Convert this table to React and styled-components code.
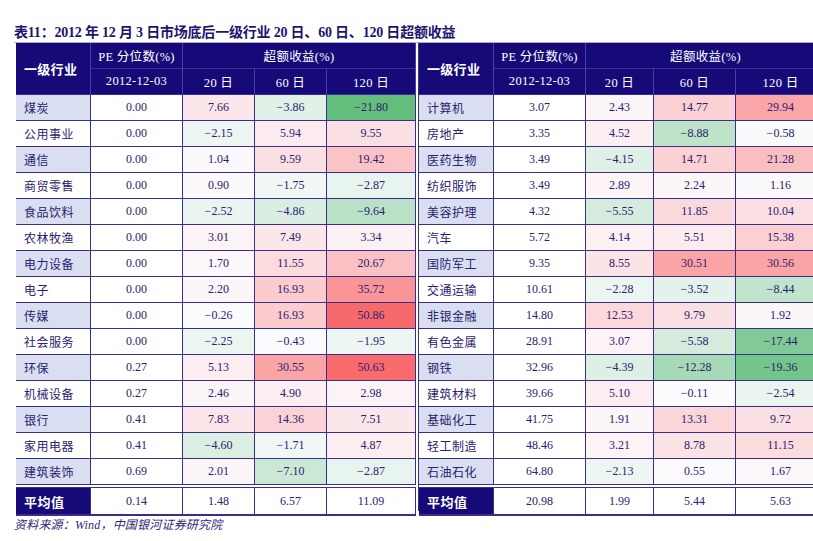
import styled, { createGlobalStyle } from 'styled-components';

const GlobalStyle = createGlobalStyle`
  html, body {
    margin: 0;
    padding: 0;
    background: #ffffff;
    overflow: hidden;
  }
  body {
    font-family: "Liberation Serif", "Noto Sans CJK SC", serif;
  }
`;

const NAVY = '#160a78';
const LINE = '#3a2d8c';
const INK = '#2a2270';

const leftRows = [
  ['煤炭', '0.00', 7.66, -3.86, -21.8],
  ['公用事业', '0.00', -2.15, 5.94, 9.55],
  ['通信', '0.00', 1.04, 9.59, 19.42],
  ['商贸零售', '0.00', 0.9, -1.75, -2.87],
  ['食品饮料', '0.00', -2.52, -4.86, -9.64],
  ['农林牧渔', '0.00', 3.01, 7.49, 3.34],
  ['电力设备', '0.00', 1.7, 11.55, 20.67],
  ['电子', '0.00', 2.2, 16.93, 35.72],
  ['传媒', '0.00', -0.26, 16.93, 50.86],
  ['社会服务', '0.00', -2.25, -0.43, -1.95],
  ['环保', '0.27', 5.13, 30.55, 50.63],
  ['机械设备', '0.27', 2.46, 4.9, 2.98],
  ['银行', '0.41', 7.83, 14.36, 7.51],
  ['家用电器', '0.41', -4.6, -1.71, 4.87],
  ['建筑装饰', '0.69', 2.01, -7.1, -2.87],
];

const rightRows = [
  ['计算机', '3.07', 2.43, 14.77, 29.94],
  ['房地产', '3.35', 4.52, -8.88, -0.58],
  ['医药生物', '3.49', -4.15, 14.71, 21.28],
  ['纺织服饰', '3.49', 2.89, 2.24, 1.16],
  ['美容护理', '4.32', -5.55, 11.85, 10.04],
  ['汽车', '5.72', 4.14, 5.51, 15.38],
  ['国防军工', '9.35', 8.55, 30.51, 30.56],
  ['交通运输', '10.61', -2.28, -3.52, -8.44],
  ['非银金融', '14.80', 12.53, 9.79, 1.92],
  ['有色金属', '28.91', 3.07, -5.58, -17.44],
  ['钢铁', '32.96', -4.39, -12.28, -19.36],
  ['建筑材料', '39.66', 5.1, -0.11, -2.54],
  ['基础化工', '41.75', 1.91, 13.31, 9.72],
  ['轻工制造', '48.46', 3.21, 8.78, 11.15],
  ['石油石化', '64.80', -2.13, 0.55, 1.67],
];

const leftAvg = ['0.14', '1.48', '6.57', '11.09'];
const rightAvg = ['20.98', '1.99', '5.44', '5.63'];

// Excel style three colour scale: green (min) - white (0) - red (max)
const MAX = 50.86;
const MIN = -21.8;
const mix = (a, b, t) => a.map((v, i) => Math.round(v + (b[i] - v) * t));
const heat = (v) => {
  const mid = [252, 252, 255];
  const c = v >= 0 ? mix(mid, [248, 105, 107], v / MAX) : mix(mid, [99, 190, 123], v / MIN);
  return `rgb(${c.join(',')})`;
};

const fmt = (v) => {
  const s = v.toFixed(2);
  return v < 0 ? '\u2212' + s.slice(1) : s;
};

const Page = styled.div`
  width: 840px;
  padding-left: 14px;
  color: ${INK};
`;

const Title = styled.h1`
  margin: 0;
  padding-top: 23px;
  height: 19px;
  line-height: 19px;
  font-size: 14px;
  font-weight: bold;
  color: #1c1470;
  white-space: nowrap;
  letter-spacing: -0.2px;
  border-bottom: 1px solid #aaa6d4;
`;

const Tables = styled.div`
  display: flex;
  gap: 2px;
  margin-left: 2px;
`;

const Panel = styled.div`
  display: grid;
  grid-template-columns: ${(p) => p.$cols};
  grid-auto-rows: 26px;
  border-left: ${(p) => (p.$first ? 'none' : `1px solid ${LINE}`)};
  align-content: start;
`;

const Head = styled.div`
  box-sizing: border-box;
  background: ${NAVY};
  color: #ffffff;
  font-size: ${(p) => (p.$left ? '13px' : '12.5px')};
  font-weight: ${(p) => (p.$left ? 600 : 'normal')};
  display: flex;
  align-items: center;
  justify-content: ${(p) => (p.$left ? 'flex-start' : 'center')};
  padding-left: ${(p) => (p.$left ? '8px' : '0')};
  border-right: 1px solid #4c40a4;
  border-bottom: 1px solid #3a2e98;
  grid-row: ${(p) => (p.$rows ? `span ${p.$rows}` : 'auto')};
  grid-column: ${(p) => (p.$cols ? `span ${p.$cols}` : 'auto')};
  letter-spacing: 0.3px;
`;

const Cell = styled.div`
  box-sizing: border-box;
  background: ${(p) => p.$bg || '#ffffff'};
  font-size: 12px;
  display: flex;
  align-items: center;
  justify-content: ${(p) => (p.$left ? 'flex-start' : 'center')};
  padding-left: ${(p) => (p.$left ? '8px' : '0')};
  border-right: 1px solid ${LINE};
  border-bottom: 1px solid ${LINE};
  letter-spacing: ${(p) => (p.$left ? '0.5px' : '0')};
  white-space: nowrap;
`;

const AvgRow = styled.div`
  grid-column: 1 / -1;
  display: grid;
  grid-template-columns: subgrid;
  margin-top: 2px;
  border-top: 1px solid ${LINE};
  border-bottom: 2px solid ${LINE};
  height: 29px;
  box-sizing: border-box;
`;

const AvgLabel = styled(Cell)`
  background: ${NAVY};
  color: #ffffff;
  font-weight: bold;
  font-size: 13px;
  border-bottom: none;
`;

const AvgCell = styled(Cell)`
  border-bottom: none;
`;

const Source = styled.div`
  margin-top: 6px;
  font-size: 12px;
  font-style: italic;
  color: #2e2878;
  line-height: 16px;
  letter-spacing: 0.2px;
`;

const TablePanel = ({ rows, avg, cols, first }) => (
  <Panel $cols={cols} $first={first}>
    <Head $left $rows={2}>一级行业</Head>
    <Head>PE 分位数(%)</Head>
    <Head $cols={3}>超额收益(%)</Head>
    <Head>2012-12-03</Head>
    <Head>20 日</Head>
    <Head>60 日</Head>
    <Head>120 日</Head>
    {rows.map((r, i) => [
      <Cell key={r[0]} $left $bg={i % 2 === 0 ? '#d9dff1' : '#ffffff'}>{r[0]}</Cell>,
      <Cell key={r[0] + 'pe'}>{r[1]}</Cell>,
      ...r.slice(2).map((v, j) => (
        <Cell key={r[0] + j} $bg={heat(v)}>{fmt(v)}</Cell>
      )),
    ])}
    <AvgRow>
      <AvgLabel $left>平均值</AvgLabel>
      {avg.map((v, i) => (
        <AvgCell key={i}>{v}</AvgCell>
      ))}
    </AvgRow>
  </Panel>
);

const App = () => (
  <Page>
    <GlobalStyle />
    <Title>表11：2012 年 12 月 3 日市场底后一级行业 20 日、60 日、120 日超额收益</Title>
    <Tables>
      <TablePanel first rows={leftRows} avg={leftAvg} cols="75px 92px 72px 72px 89px" />
      <TablePanel rows={rightRows} avg={rightAvg} cols="75px 92px 68px 82px 90px" />
    </Tables>
    <Source>资料来源：Wind，中国银河证券研究院</Source>
  </Page>
);

export default App;
